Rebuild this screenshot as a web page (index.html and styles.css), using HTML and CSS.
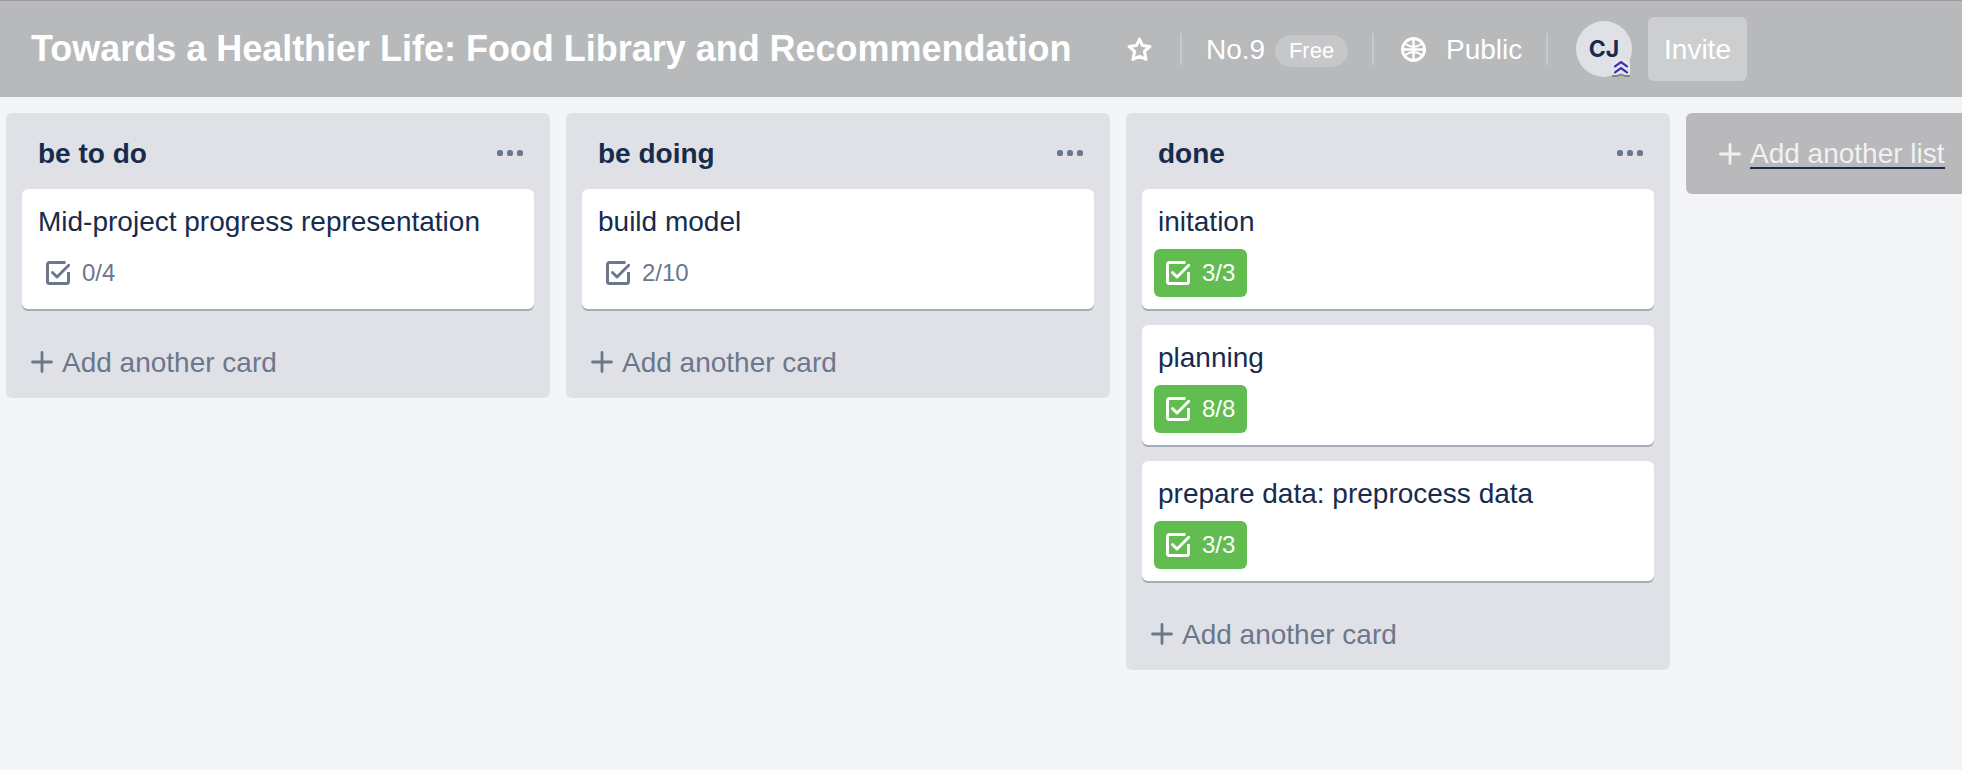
FILE: index.html
```html
<!DOCTYPE html>
<html lang="en">
<head>
<meta charset="utf-8">
<title>Board</title>
<link rel="stylesheet" href="styles.css">
</head>
<body>
<svg class="defs" aria-hidden="true">
  <symbol id="check" viewBox="0 0 24 24">
    <path d="M19.5 1.5H3.500a2 2 0 0 0-2 2v17a2 2 0 0 0 2 2h17a2 2 0 0 0 2-2V11" fill="none" stroke="currentColor" stroke-width="3"/>
    <path d="M6.500 11.500l4.500 4.500L22.700 4.300" fill="none" stroke="currentColor" stroke-width="2.900" stroke-linecap="round" stroke-linejoin="round"/>
  </symbol>
  <symbol id="plus" viewBox="0 0 22 22">
    <path d="M11 1.5v19M1.5 11h19" stroke="currentColor" stroke-width="2.8" stroke-linecap="round"/>
  </symbol>
  <symbol id="dots" viewBox="0 0 26 6">
    <rect width="6" height="6" rx="2.6" fill="currentColor"/><rect x="10" width="6" height="6" rx="2.6" fill="currentColor"/><rect x="20" width="6" height="6" rx="2.6" fill="currentColor"/>
  </symbol>
</svg>
<header class="header">
  <h1 class="title">Towards a Healthier Life: Food Library and Recommendation</h1>
  <svg class="star" viewBox="0 0 24 24"><path d="M12 2l2.900 6.200 7.100.9-5.300 4.800 1.600 7.600L12 18.600l-6.300 2.900 1.600-7.600L2 9.100l7.100-.9z" fill="none" stroke="currentColor" stroke-width="2.900" stroke-linejoin="round"/></svg>
  <span class="divider"></span>
  <span class="team">No.9</span><span class="pill">Free</span>
  <span class="divider after-pill"></span>
  <svg class="globe" viewBox="0 0 24 24"><g fill="none" stroke="currentColor" stroke-width="2.800"><circle cx="12" cy="12" r="10.600"/><path d="M12 2v20M2 12h20" stroke-width="2.300"/><path d="M4 6.500Q12 12.500 20 6.500M4 17.500Q12 11.500 20 17.500" stroke-width="1.900"/></g></svg>
  <span class="public">Public</span>
  <span class="divider after-public"></span>
  <span class="avatar">CJ
    <svg class="rank" viewBox="0 0 18 18"><path d="M0 4Q0 0 5 0H13Q18 0 18 4V18L13 16.500H12L9 15 6 16.500H5L0 18z" fill="#e3e5ea"/><path d="M0 16h5l4-1.500 4 1.500h5v2h-5l-4-1.500L5 18H0z" fill="#858585"/><path d="M3 7.300l6-4.300 6 4.300M3 13.300l6-4.300 6 4.300" fill="none" stroke="#3a2fb0" stroke-width="2.200" stroke-linecap="round"/></svg>
  </span>
  <button class="invite">Invite</button>
</header>
<main class="board">
  <section class="list">
    <div class="list-head"><h2>be to do</h2><svg class="dots"><use href="#dots"/></svg></div>
    <article class="card"><p>Mid-project progress representation</p><span class="badge"><svg><use href="#check"/></svg>0/4</span></article>
    <div class="add"><svg><use href="#plus"/></svg><span>Add another card</span></div>
  </section>
  <section class="list">
    <div class="list-head"><h2>be doing</h2><svg class="dots"><use href="#dots"/></svg></div>
    <article class="card"><p>build model</p><span class="badge"><svg><use href="#check"/></svg>2/10</span></article>
    <div class="add"><svg><use href="#plus"/></svg><span>Add another card</span></div>
  </section>
  <section class="list">
    <div class="list-head"><h2>done</h2><svg class="dots"><use href="#dots"/></svg></div>
    <article class="card"><p>initation</p><span class="badge complete"><svg><use href="#check"/></svg>3/3</span></article>
    <article class="card"><p>planning</p><span class="badge complete"><svg><use href="#check"/></svg>8/8</span></article>
    <article class="card"><p>prepare data: preprocess data</p><span class="badge complete"><svg><use href="#check"/></svg>3/3</span></article>
    <div class="add"><svg><use href="#plus"/></svg><span>Add another card</span></div>
  </section>
  <div class="new-list"><svg><use href="#plus"/></svg><a>Add another list</a></div>
</main>
</body>
</html>
```

FILE: styles.css
```css
* { box-sizing: border-box; margin: 0; }
body {
  height: 770px;
  overflow: hidden;
  background: #f4f5f7;
  color: #172b4d;
  font: 28px/40px "Liberation Sans", Arial, sans-serif;
}
.defs { position: absolute; width: 0; height: 0; }
svg { display: block; flex: none; }
.header {
  display: flex;
  align-items: center;
  height: 97px;
  padding: 0 0 0 31px;
  border-top: 1px solid #9d9d9f;
  background: #b8b9bb;
  color: #fff;
  white-space: nowrap;
}
.title { width: 1096px; font-size: 36px; line-height: 48px; letter-spacing: -0.02px; }
.star { width: 25px; height: 25px; margin-top: 1px; }
.divider { flex: none; width: 2px; height: 32px; margin: 0 24px 0 28px; background: #c8c9cb; }
.team { width: 59px; margin-top: 2px; }
.pill {
  width: 73px;
  height: 32px;
  margin: 4px 0 0 10px;
  border-radius: 16px;
  background: #c6c7c9;
  font-size: 22px;
  line-height: 32px;
  text-align: center;
}
.after-pill { margin: 0 27px 0 24px; }
.globe { width: 25px; height: 25px; margin-top: 1px; }
.public { width: 76px; margin: 2px 0 0 20px; }
.after-public { margin: 0 28px 0 24px; }
.avatar {
  position: relative;
  width: 56px;
  height: 56px;
  border-radius: 50%;
  background: #dfe1e6;
  color: #172b4d;
  font: 700 23px/57px Inter, sans-serif;
  text-align: center;
}
.rank { position: absolute; right: 2px; bottom: 0; width: 18px; height: 18px; }
.invite {
  width: 99px;
  height: 64px;
  margin-left: 16px;
  padding: 2px 0 0;
  border: 0;
  border-radius: 6px;
  background: #cdced0;
  color: #fff;
  font: inherit;
}
.board { display: flex; align-items: flex-start; gap: 16px; padding: 16px 0 0 6px; }
.list {
  flex: none;
  width: 544px;
  padding: 0 16px 16px;
  border-radius: 6px;
  background: #dfe1e6;
}
.list-head {
  display: flex;
  align-items: center;
  justify-content: space-between;
  height: 76px;
  padding: 4px 11px 0 16px;
}
.list-head h2 { padding-top: 2px; font-size: 28px; line-height: 40px; }
.dots { width: 26px; height: 6px; color: #6b778c; }
.card {
  height: 120px;
  margin-bottom: 16px;
  padding: 13px 12px 0;
  border-radius: 6px;
  background: #fff;
  box-shadow: 0 2px 0 #a5adba;
}
.card p { padding-left: 4px; }
.badge {
  display: inline-flex;
  align-items: center;
  gap: 12px;
  height: 48px;
  margin-top: 7px;
  padding: 0 12px;
  border-radius: 6px;
  color: #6b778c;
  font-size: 24px;
}
.badge svg { width: 24px; height: 24px; }
.complete { background: #61bd4f; color: #fff; }
.add {
  display: flex;
  align-items: center;
  gap: 9px;
  height: 40px;
  margin-top: 33px;
  padding-left: 9px;
  color: #6b778c;
}
.add span { margin-top: 2px; }
.add svg, .new-list svg { width: 22px; height: 22px; }
.new-list {
  display: flex;
  flex: none;
  align-items: center;
  gap: 9px;
  width: 544px;
  height: 81px;
  padding: 1px 0 0 33px;
  border-radius: 6px;
  background: #b9b9bb;
  color: #f1f1f2;
}
.new-list a { margin-top: 2px; line-height: 26px; border-bottom: 2px solid #172b4d; }
```
